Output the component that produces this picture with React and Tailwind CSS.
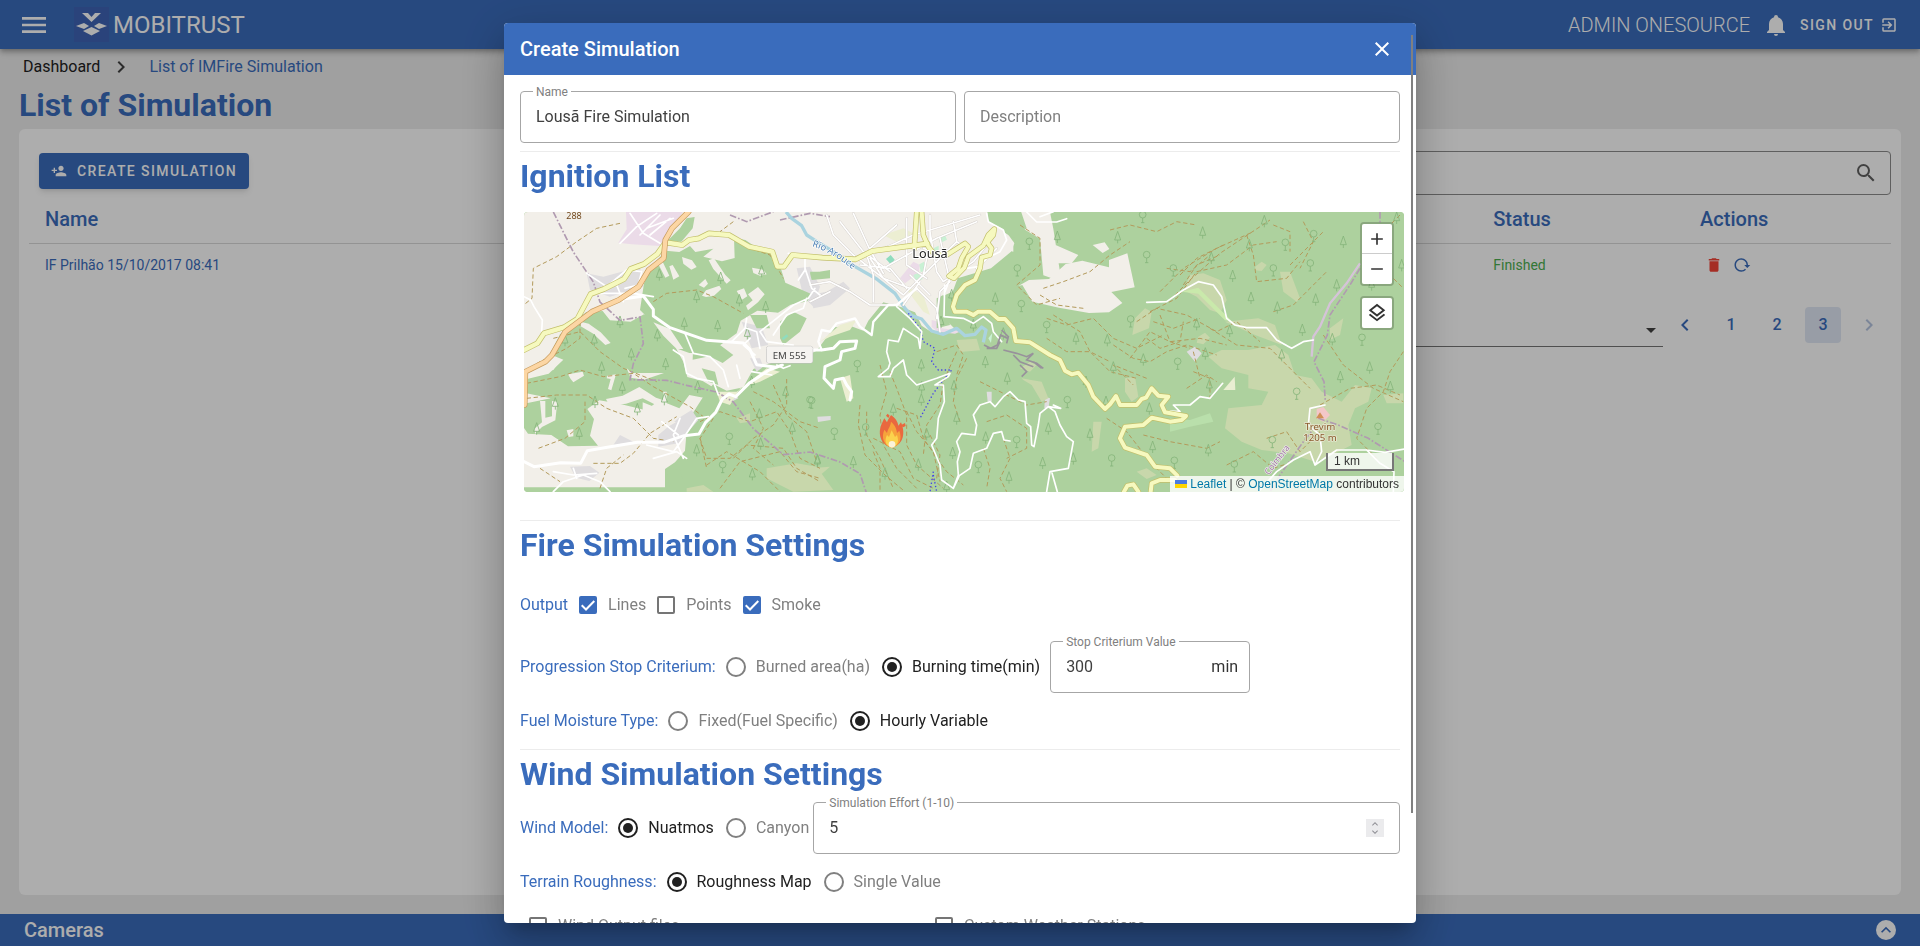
// src/App.jsx
import React, { useState } from 'react';
import {
  MdAdd,
  MdChevronLeft,
  MdChevronRight,
  MdClose,
  MdDelete,
  MdExitToApp,
  MdExpandLess,
  MdExpandMore,
  MdMenu,
  MdOutlineLayers,
  MdPersonAdd,
  MdRemove,
  MdSearch,
  MdArrowDropDown,
} from 'react-icons/md';

const Logo = () => (
  <svg viewBox="0 0 35 35" className="size-[35px] bg-[#465aaa]/40" fill="#fff" aria-hidden="true">
    <path d="M8 6h6l3.500 4L21 6h6L17.500 15z" />
    <path d="M2 19l8-3 5 3-5 3z" />
    <path d="M33 19l-8-3-5 3 5 3z" />
    <path d="M9 24l8.500-4 8.500 4-8.500 4.500z" />
  </svg>
);

const BellIcon = () => (
  <svg viewBox="0 0 24 24" className="size-6" fill="currentColor" aria-hidden="true">
    <path d="M21,19V20H3V19L5,17V11C5,7.9 7.03,5.17 10,4.29C10,4.19 10,4.1 10,4A2,2 0 0,1 12,2A2,2 0 0,1 14,4C14,4.1 14,4.19 14,4.29C16.97,5.17 19,7.9 19,11V17L21,19M14,21A2,2 0 0,1 12,23A2,2 0 0,1 10,21" />
  </svg>
);

const ReloadIcon = () => (
  <svg viewBox="0 0 24 24" className="size-[18px]" fill="currentColor" aria-hidden="true">
    <path d="M2 12C2 16.97 6.03 21 11 21C13.39 21 15.68 20.06 17.4 18.4L15.9 16.9C14.63 18.25 12.86 19 11 19C4.76 19 1.64 11.46 6.05 7.05C10.46 2.64 18 5.77 18 12H15L19 16H19.1L23 12H20C20 7.03 15.97 3 11 3C6.03 3 2 7.03 2 12Z" />
  </svg>
);

const Checkbox = ({ id, label, defaultChecked = false }) => (
  <div className="flex items-center gap-2">
    <span className="mx-[3px] grid size-[18px] place-items-center">
      <input
        id={id}
        type="checkbox"
        defaultChecked={defaultChecked}
        className="peer col-start-1 row-start-1 size-[18px] appearance-none rounded-xs border-2 border-[#757575] checked:border-[#3a6cbc] checked:bg-[#3a6cbc]"
      />
      <svg
        viewBox="0 0 18 18"
        className="pointer-events-none invisible col-start-1 row-start-1 size-[18px] peer-checked:visible"
        fill="none"
        stroke="#fff"
        strokeWidth="2"
        aria-hidden="true"
      >
        <path d="M2.700 9.300l4.300 4.200L15.300 5" />
      </svg>
    </span>
    <label htmlFor={id} className="text-[#808080]">{label}</label>
  </div>
);

const RadioGroup = ({ name, label, options, initial }) => {
  const [value, setValue] = useState(initial);

  return (
    <div role="radiogroup" aria-label={label} className="flex items-center gap-2 whitespace-nowrap">
      <span className="text-[#3a6cbc]">{label}</span>
      <div className="flex items-center gap-[10px]">
        {options.map((option) => (
          <label
            key={option}
            className={`flex items-center gap-2 ${value === option ? 'text-[#212121]' : 'text-[#808080]'}`}
          >
            <input
              type="radio"
              name={name}
              value={option}
              checked={value === option}
              onChange={() => setValue(option)}
              className="mx-[2px] grid size-5 appearance-none place-content-center rounded-full border-2 border-[#808080] checked:border-[#212121] checked:before:size-[10px] checked:before:rounded-full checked:before:bg-[#212121]"
            />
            {option}
          </label>
        ))}
      </div>
    </div>
  );
};

const Field = ({ id, label, defaultValue, type = 'text', className = '', children }) => (
  <div className={`relative flex h-[52px] items-center rounded border border-[#a6a6a6] px-[15px] ${className}`}>
    {defaultValue !== undefined && (
      <label htmlFor={id} className="absolute -top-2 left-3 bg-white px-[3px] text-xs leading-4 text-[#808080]">
        {label}
      </label>
    )}
    <input
      id={id}
      type={type}
      defaultValue={defaultValue}
      placeholder={defaultValue === undefined ? label : undefined}
      aria-label={label}
      className="w-full min-w-0 flex-1 appearance-none text-[#404040] outline-none placeholder:text-[#808080] [&::-webkit-inner-spin-button]:appearance-none"
    />
    {children}
  </div>
);

const SectionTitle = ({ children }) => (
  <h2 className="h-12 text-[32px] leading-12 font-bold text-[#3a6cbc]">{children}</h2>
);

// [x, y] of the conifer symbols
const TREES = [
  [418, 208], [602, 218], [725, 198], [493, 355], [593, 362], [658, 285], [530, 275], [737, 305], [412, 390],
  [135, 405], [223, 405], [334, 447], [245, 487], [437, 476], [307, 547], [352, 612], [225, 590], [106, 595],
  [50, 670], [178, 685], [433, 582], [533, 545], [300, 350], [682, 385], [718, 628], [797, 562], [817, 670],
  [722, 715], [530, 735], [697, 807], [893, 765], [695, 530],
  [1205, 546], [1204, 480], [1204, 583], [1120, 613], [1310, 640], [1220, 687], [1195, 778], [1298, 743],
  [1396, 470], [1462, 520], [1302, 543], [1397, 697], [1467, 817], [1568, 773], [1660, 760], [1710, 688],
  [1585, 670], [1426, 280], [1612, 95], [1668, 400], [1095, 805], [1263, 350], [1360, 360], [1450, 385], [1758, 590],
  [1698, 530], [1762, 405], [1295, 270], [1000, 770], [892, 768], [1280, 845],
  [1793, 96], [2048, 82], [2074, 158], [2188, 120], [2233, 48], [2138, 212], [2193, 278], [2272, 307], [2387, 283],
  [2450, 240], [2470, 110], [2630, 38], [2645, 180], [2347, 374], [2437, 402], [2549, 487], [2461, 515],
  [2611, 545], [2129, 377], [2030, 357], [2056, 445], [1870, 463], [1780, 487], [1888, 610], [1898, 725],
  [2065, 735], [2555, 238], [2068, 540], [2285, 450],
];

// [x, y] of the broadleaf symbols
const ROUND_TREES = [
  [875, 592], [608, 785], [628, 700], [1504, 302], [1528, 115], [1580, 365], [1492, 195], [1490, 710],
  [943, 685], [1037, 672], [1375, 785], [1642, 590], [1012, 482], [870, 590], [2296, 118], [2381, 92], [2260, 195],
  [1832, 348], [1973, 475], [2257, 710], [2574, 670], [1963, 772], [2143, 783], [2330, 565], [2371, 180],
  [1868, 35], [1960, 195], [1880, 155], [2526, 403], [1775, 765],
];

// Footpaths
const TRACKS = [
  'M300 55l-70 15-60 40-60 45-70 35-4 90-25 20',
  'M400 290l40-25 90-10 50 20 90 50',
  'M180 350v50l-40 30-80 40-48 30',
  'M100 400l80-20 60 60 70 50 100 40',
  'M20 535l100-20 60-20 70 20 90-10 60 40 110 60 40 30',
  'M20 580l90-10 90 0 60 40 80 30 60 60 60 10',
  'M195 590v60l-60 50-80 30',
  'M220 775l80 0 40-30 50-60 80-50',
  'M240 850l20-60 50-40',
  'M60 790l60 40',
  'M640 50l-40 30 90 50 60 20 40 70',
  'M540 650l60-30 90 30 80-30 40 60 30 80 60 30',
  'M540 700l20 60 70 0 50-40 110 10 40 60 70 40',
  'M640 760l60-60 60-40 40-60 0-80',
  'M600 850l60-80 120-30 50 60 70 20',
  'M560 780l60-40 100 60 60 60',
  'M700 560l60 30 80 60 60 20',
  'M690 590l40 80-30 60 60 50M760 540l40 90 60 50 30 90M580 640l-40 60 20 90',
  'M1020 600l-5 60 20 90 60 60 60 50',
  'M1040 620l0 70 40 70 40 90M1060 740l20 50 0 70M1160 620l30 60 50 60 20 90',
  'M1080 480l20 80-20 70 10 90 40 70 60 60',
  'M1110 500l20 50 30 80 0 90 30 60 80 70',
  'M1130 610l60 20 20 70 70 100 50 40',
  'M1060 700l80 40 40 80 60 30',
  'M1340 460l-30 60-10 70 20 60',
  'M1310 440l-40 90-10 70-40 60-10 90',
  'M1250 440l60-20 20 30-20 60M1230 690l30 60-10 70',
  'M1380 530l60 30 80 40 60-10',
  'M1400 650l60-20 60 40 0 60-60 30',
  'M1390 730l20 60-10 60M1450 700l20 60-30 60 20 40',
  'M1580 400l60 40 70 0 60 60 80 20',
  'M1580 340l60 20 80-20 60 60 70 30 80-40',
  'M1560 270l50 30 80 10M1600 330l80 50 30 60 60 30',
  'M1500 60l60 40 0 80-70 60 60 60 70-20',
  'M1570 250l60-20 80-30 60-50 60-40',
  'M1770 75l60-15 80 20 60-30 60 10',
  'M1950 285l60-60 90-80 90-60 60-40',
  'M1920 260l70-70 100-60 110-50',
  'M1890 320l80-40 60-80 90-20 80-60 70-10',
  'M1980 210l50-50 80-40M1990 240l40-60 70-30M1940 190l70 10 60-50',
  'M2180 90l20 60 10 80 90-10 40-50',
  'M2260 60l50 20 0 60M2310 180l40-40 60-60M2350 50l30 60-40 80',
  'M1850 350l60-40 90 20 90 50 60-30 70 60',
  'M1830 460l60-80 60 30 90-10 80 20',
  'M1880 400l40 30 60-20 10-60M1900 350l60 20 80-30M1920 330l30 80 60 20',
  'M1780 420l60 40 50 10 50-30 60-20 90 30',
  'M2070 370l80 50 100 10 60 60 60 60',
  'M2260 320l60-20 60-60 40-40',
  'M2410 390l60 90 90 70 90 40',
  'M2650 440l-40 60-20 60-50 50-30 90 60 60',
  'M2020 500l50 20 0 60M2000 550l60-40 30 20M2020 440l20 80',
  'M2400 600l90-50 80-10 70 30',
  'M2240 700l60-20 40 60 60-60',
  'M2120 780l80-40 60 50 60-20',
  'M1870 690l80 20 110 20 40-20',
  'M1880 520l-100-40 60 60',
  'M2640 30l-90 90 40 70 60 60',
  'M1760 640l60 40 70 90 60 60',
];

const TOWN_STREETS =
  'M920 30l20 60 60 60 90 70 60 50 60-60 20-100 0-80M960 50l70 90 80 60M1000 25l50 110 40 70M1050 150l130-60 200-60M1090 190l160-90 120-50M1130 60l-80 70M1160 40v140l60 40M1200 230l-50 70M1230 80l20 120 20 30M1260 100l30 130-30 30-10 80M1270 230l90-60 40-50M1300 50l10 60 30 20M1210 130l70 20M1190 250l60 60 10 70M1040 150l20 60 0 80M1370 190l60-60M870 240l60-10 60 30 60 40 70 0M870 290l60-30M1170 250l-80-30-40-60M1170 210l60 60M1310 110l-60 60-60 60M1020 180l90 10 50 60';

const VALLEY_ROAD =
  'M12 435l40-20 20-30 60-18 40-25 40-75 40-15 60-30 20-30 40-15 40-30 25-35 50 8 20-15 30-5 30-15 60 5 60 35 70 15 15 45 20 0 25-35 90 8 100 5 50-25 165-22';

const MOUNTAIN_ROAD =
  'M1190 21L1183 130M1205 21L1210 90 1225 125 1245 150 1280 150 1335 115 1345 125 1325 160 1315 190 1287 213 1302 220 1333 188 1345 155 1390 122 1405 90 1423 72 1420 90 1402 112 1415 130 1410 150 1385 157 1380 190 1365 225 1335 240 1310 270 1299 305 1305 320 1340 320 1360 330 1375 320 1410 320 1435 342 1455 342 1480 370 1487 408 1530 412 1590 450 1620 465 1635 497 1655 508 1675 503 1705 540 1720 575 1755 612 1770 598 1788 573 1800 600 1850 600 1865 582 1878 578 1895 550 1915 572 1945 575 1925 600 1935 622 1998 633 1985 645 1950 650 1895 638 1870 660 1815 665 1800 700 1815 728 1880 750 1905 785 1950 790 1972 812M1812 860L1822 842 1840 838 1855 860M1892 860L1895 835 1920 825 1965 825';

const TRUNK_ROAD =
  'M14 600l2-100 60-30 20-20 40-70 80-60 80-35 60-40 30-50 45-35 5-55 20-35 50-50';

const SimulationMap = () => (
  <svg viewBox="12 21 2640 840" preserveAspectRatio="xMidYMid slice" className="h-full w-full" role="img" aria-label="Map of Lousã">
    <defs>
      <g id="conifer" fill="none" stroke="#86b57b" strokeWidth="2.500">
        <path d="M0-17L-9 9H9zM0 9v10" />
      </g>
      <g id="broadleaf" fill="none" stroke="#86b57b" strokeWidth="2.500">
        <circle cy="-6" r="10" />
        <path d="M0 4v14M-5 18h10" />
      </g>
    </defs>
    <rect x="0" y="0" width="2700" height="900" fill="#add19e" />

    {/* farmland and town */}
    <path
      fill="#f2efe9"
      d="M0 0H1400l5 50 50 25 28 40-10 25-60 50-100 30-15 40-28 12-5 60 40 40-70 10-30-20-20-40-40-15-55-15-45 55-15 30-40-15-45 5-25 30-30 40-20 10-40 25-70 0-60 20-30 55-50 10-40-20-25 30-35 55-20 55-5 60-30 35-30 20v55H0z"
    />
    <path fill="#f2efe9" d="M1495 243l32-18 60-3 50-45 50-10 80 20 0-22 55-20 22 102-70 14 33 33-40 28-60 2-90-16-80-18-30-50z" />
    <path fill="#f2efe9" d="M1480 21h110l10 50 20 130-20 20-30-10-10-110-50-30zM1585 140l10-25 80 35-20 25-50 0zM1718 120l36-8 14 20-20 12zM1455 90l25 20 0 30-20-5z" />

    {/* industrial and residential */}
    <path fill="#ebdbe8" d="M318 21h170l-28 50-40 52-85-5-40-5 25-40z" />
    <path fill="#ebdbe8" d="M1140 220l40-50 20 10-5 25-40 30zM1235 345l20 5 10 20 60 8-20 8-50-5-20-15z" />
    <path
      fill="#dfdddf"
      d="M200 205l50 10 110-30 10 60-100 30-60-20zM665 350l60 15 20 55-50 10zM830 190l40-5 30 60-20 60-30-30zM415 690l60-50 40-25 20 30-60 70-60 10zM150 785l60-2 28 20-30 25-40-10zM300 690l40 20-60 10zM690 460l30 0 10 25-20 15zM640 560l15 20-20 10zM870 270l50-10 50-30 20 20-60 50-50 10zM1400 560l15 0 0 30-12 0zM1575 575l15 5-5 30-12 0zM892 635l40-2 0 12-38 6zM2000 440l25-15 20 20-20 25z"
    />
    <path fill="#eceed2" d="M590 560l60 0 90-70 40 10-60 30-60 20-30 50-30-10zM900 410l60-50 50-15-20 30-60 20zM960 520l30-10 10 70-20 10zM1150 240l60 30 20 60-20-10zM1090 90l60-20 40 20-60 20z" />

    {/* forest patches */}
    <g fill="#add19e">
      <path d="M372 235l30-60 36-38 40 4 32-18 16 18 54-10-30 24 56 14 38-10-2-60 34 6 30 20 44 20 34 50 12 38 78 34-12 22-50 10-38 24-62-6-50 30-12 38-50 36-70-4-90-32-40-30-40-40z" />
      <path d="M90 448l30-60 78-66 50-4 22 28 62 4 40-22 46 18 42 38 60 20 18 40-30 0-40-14 22 40 12 46 46 12 50 30-40 22-50-10-30 40-60-24-40 30-80-20-60-10-36 26 20 30-12 50 24 30-90 2-50-34-70-4-28-40-4-46 100-20-86-18 0-36 80-20 44-42z" />
      <path d="M520 412l80 8 40 30-32 24-40-20-50 10zM545 490l40 10 10 40-30-10zM500 40l24-4-6 34-34 40-44 0 40-40zM780 350l40-30 40 20-20 40-50 40-10-20zM690 330l50 0 10 40-40 0zM720 250l10-20-30 40zM870 200l26 0 0 18-22 0zM440 790l40 5 20 65h-50zM870 205l60-10 0 25-55 5z" />
      <path d="M1250 280l20-10 20 90-40 10zM1440 30l60-20 20 60-40 30-30-20z" />
    </g>
    <g fill="#f2efe9">
      <path d="M412 172l12-10 24 50-12 6zM448 184l10-4 20 34-18 10zM486 156l30 10 14 20-16 8-24-18zM566 166l16-6 34 50 16 16-12 10-40-44zM546 272l12-16 40-14 6 10-22 20-24 4zM696 188l34 6 10 14-20 4-20-8zM536 240l20-18 8 14-12 12zM650 258l22-8 10 24-16 10zM684 268l30-22 20 22-20 24-30 24-6-14 20-16z" />
      <path d="M182 350l24 6 36 26 30 32-16 6-36-34-38-22zM262 512l26-4-14 48-10-4 8-30-12-2zM258 582l50-10 50-26 50 32 30 10-30 12-40-20-50 16-50 6zM368 592l30 12 30 36 40 12-30 16-40-22-30-20zM144 508l44-8 4 12-32 20-8-10zM60 588l16 0 0 50 20-4 0-46 16 2-6 56-40 20-20 20-4-14 24-20zM20 505l30-24 60 0-10 14-60 10zM140 676l20-4 0 22-14 2zM94 702l20 0-6 12-12 0zM320 490l16 14 96 0-60 20-40-6zM430 560l10 0 0 40-12 0zM400 352l50 20 40 60-20 0-40-40z" />
    </g>

    {/* heath */}
    <g fill="#c8d7ab">
      <path d="M2065 455l40-20 80 0 80-15 40 30 20 60 50 10 30 40 60 30 40-50 50 10-10 40-40 20-20 50 10 60-60 30-50 20-80-25-80-10-60-25-50-40 10-60 100-10 20-40-60-10 0-40-80-20z" />
      <path d="M1990 255l20-45 40-5 50 20 20 60-20 40-30-10-40-40zM2115 350l100-10 50 20 20 60-80-30zM2280 200l30 0 30 80-10 10-40-30zM2430 370l40-30-10 50-30 15zM1845 340l30-30 20 10-8 50-50 20zM1815 520l30-5 10 60-20 15-20-30zM2035 395l20-12 15 15-20 20-20-5zM2205 185l20-15 15 10-15 18-18-2zM2590 570l60-5 0 30-50 0zM1850 800l30-10 30 20-30 12z" />
      <path d="M1310 405l60-4 10 35-60 5zM1505 520l60 10 20 50-20 10-30-50-25-15zM740 790l90-15 60 10 50 70-120 5-80-40zM650 640l40-15 0 25-30 5zM1720 650l25 0-10 80-20 10zM870 790l60-5-40 35zM500 850l50-10 30 20h-80zM1500 490l30-20 20 10-20 20z" />
    </g>
    <path fill="#f3c7c8" d="M2390 612l20-6 20 24-20 20-20-10z" />
    <path fill="#e9eed2" d="M2110 555l34-40 2 40z" />
    <path fill="#b9dfab" d="M1950 640l60 5 60-20 10 25-70 15-60 15z" />
    <path fill="#c9e9ab" d="M1985 260l50-12 60 60 40 40-20-2-50-50-30-30z" />
    <path fill="#8fdcbe" d="M1098 162l14-12 12 14-12 14zM785 400l15-12 5 6-15 12z" />
    <path fill="#c9f1d4" d="M1198 178l14-8 6 26-16 6zM1180 210l20-8 8 20-20 8zM1255 100l20-10 6 14-20 10zM1240 130l16-8 0 14-14 4zM1405 400l12-16-4 30z" />

    {/* tracks */}
    <g fill="none" stroke="#b39a5b" strokeWidth="3" strokeDasharray="13 8">
      {TRACKS.map((d) => (
        <path key={d} d={d} />
      ))}
    </g>

    {TREES.map(([x, y]) => (
      <use key={`${x}-${y}`} href="#conifer" x={x} y={y} />
    ))}
    {ROUND_TREES.map(([x, y]) => (
      <use key={`${x}-${y}`} href="#broadleaf" x={x} y={y} />
    ))}

    {/* municipality borders */}
    <g fill="none" stroke="#b09ab0" strokeWidth="5" strokeDasharray="20 6 5 6">
      <path d="M100 21l60 120 60 90 20 60 60 55 60-10 10 80-30 60-10 48 110 2 60 15 90 20 50 30 60 80 90 78 80-8 90 30 60 35 30 90" />
      <path d="M630 30l50 20 80-30M780 45l90-20 60 10" />
      <path d="M2580 21v40M2520 190l-30 50-60 90-8 60-40 80 30 60 4 60M2395 640l60 20 90 40 110 70M2390 660l-40 50-70 100-30 50" />
    </g>
    <path fill="none" stroke="#d5c3d8" strokeWidth="7" d="M2520 175l-40 60-50 60-30 70-20 30-5 60" />

    {/* river */}
    <path
      fill="none"
      stroke="#aad3df"
      strokeWidth="10"
      strokeLinejoin="round"
      d="M798 21L815 40 845 62 860 90 885 106 940 140 1000 182 1070 222 1125 265 1155 310 1175 332 1205 342 1235 378 1270 388 1310 370 1335 392 1365 388 1385 366 1398 375 1390 412"
    />
    <path fill="none" stroke="#4340e8" strokeWidth="4" strokeDasharray="4 7" d="M1165 325l35 45 10 40 35 20-10 40 20 25 40 0-25 30-30 40-40 75M1240 800l-10 60M1240 810l10 50" />

    {/* small roads */}
    <g fill="none" strokeLinejoin="round" strokeLinecap="round">
      <path stroke="#cfcac6" strokeWidth="7" d={TOWN_STREETS} />
      <g stroke="#fff" strokeWidth="5">
        <path d={TOWN_STREETS} />
        <path d="M330 25l40 60 50 30M300 115l50-50 60-40M360 90l60-60M380 70l80-30M390 90l60-50M12 275l20 10 10 20 25 40-2 35M200 205l60 40 60-50 45 5-10 40-40 10M240 265l100 0 60 10M290 240l20 50M460 435l30 20 10 50 30 15 50 10 15 40M495 385l25 60 50 10 40 40 15 50M680 340l-5 30-40 40M680 370l30 10 10 50M690 400l-20 20 35 30M720 380l50-40 50-40 45-20 20-30M720 380l20 30 80 10M805 145l50 10 0 40-20 30M855 190l20 60 25 20M860 280l-10 30-50 20-40 60M380 720l80 20 30-40 40-60 35-5M400 760l70-20 30 20M480 640l-20 50 30 70M425 650l50 40M695 500l60 10M650 480l10 40M770 480l20 10 20-8M100 860l30-30 60-20 50 20 30 30M160 790l10 30M100 800l60 10 70-5" />
        <path d="M1130 305L1170 340 1205 380 1200 430 1195 400 1150 370 1135 410 1105 405 1100 440 1110 475 1105 490 1075 515 1110 515 1120 490 1150 465 1160 510 1190 540 1250 520 1290 505 1285 515 1245 540 1270 540 1273 590 1255 640 1250 700 1235 720 1260 780 1265 825 1300 850 1315 810 1312 770 1320 740 1310 710 1325 685 1365 690 1370 660 1360 630 1380 600 1410 590 1425 605 1450 575 1470 560 1495 585 1515 590 1520 655 1532 665 1535 720 1542 725 1555 660 1560 625 1585 605 1605 620 1620 660 1640 695 1660 710 1645 790 1590 800 1580 860M1300 850L1318 812 1350 790 1360 745 1400 730 1420 685 1445 680 1452 705 1470 708M1595 800L1612 860M1585 605L1622 610 1600 600" />
        <path d="M1400 25L1405 50 1450 75 1460 105 1440 140 1400 160 1375 185 1340 190M1274 240L1272 335 1330 340 1360 355 1390 335 1415 355 1420 380 1445 410M1290 220L1275 260M1520 21l30 30 60 0 30-10M1560 35l40-15" />
        <path d="M1880 292L1940 290 1990 255 2035 230 2080 240 2105 275 2120 340 2145 360 2180 368 2240 368 2270 405 2315 430 2350 410 2380 405M2108 535L2070 580 2040 575 2010 600 1960 600 1980 620 1950 618M2415 600L2370 610 2365 660 2400 690 2405 740 2385 780 2370 740 2320 765 2270 800 2220 855M2385 780L2450 735 2540 735 2595 742 2655 732M2540 735L2580 775 2622 800 2620 860" />
      </g>
      <g stroke="#fff" strokeWidth="9">
        <path d="M12 770l30 15 80-12 60 2 20-38 60-10 90-15 80 0 60-20 45-5 20-35 30-30 20-40 20-15 20 8 40-40 60-40 40-15M290 285l80-12 30 40 0 20 50 35 110 38 110 8 20 20 20 45 60 8" />
        <path d="M870 435L905 435 940 430 960 410 1010 408 1005 430 965 440 960 465 915 485 912 520 940 550 945 525 970 520 980 540 995 560 990 585" />
        <path strokeWidth="7" d="M905 435L895 410 905 375 930 380 950 355 1005 340 1020 365 1055 390 1060 350 1105 300 1130 300 1190 250" />
      </g>

      {/* secondary and trunk roads */}
      <path stroke="#c2bf6a" strokeWidth="17" d={VALLEY_ROAD} />
      <path stroke="#c2bf6a" strokeWidth="16" d={MOUNTAIN_ROAD} />
      <path stroke="#f6f9bf" strokeWidth="13" d={VALLEY_ROAD} />
      <path stroke="#f6f9bf" strokeWidth="12" d={MOUNTAIN_ROAD} />
      <path stroke="#c79a5c" strokeWidth="17" d={TRUNK_ROAD} />
      <path stroke="#fcd6a4" strokeWidth="13" d={TRUNK_ROAD} />
    </g>

    {/* cliffs */}
    <path
      fill="none"
      stroke="#98929b"
      strokeWidth="5"
      d="M1392 420l20 10 20-10 10-30 20 10M1400 430l30 0 10-20M1450 435l40 10 30 10 20-10-20 20 30 10 20 15M1480 450l20 20 40 15M1500 480l20 20-15 15M1445 375l20 20-5 20M1540 470l25 20"
    />

    {/* labels */}
    <g fontFamily="Noto Sans, sans-serif" textAnchor="middle" paintOrder="stroke" strokeLinejoin="round">
      <text x="162" y="43" fontSize="27" fill="#734a1f" stroke="#f2efe9" strokeWidth="5">288</text>
      <text x="1230" y="158" fontSize="38" fill="#222" stroke="#fff" strokeWidth="6">Lousã</text>
      <path id="river-label" d="M876 124q60 16 140 84" fill="none" />
      <text fontSize="28" fill="#4d80b3" stroke="#fff" strokeWidth="4" textAnchor="start">
        <textPath href="#river-label">Rio Arouce</textPath>
      </text>
      <rect x="740" y="424" width="138" height="50" rx="6" fill="#f5f3f0" stroke="#bbb" strokeWidth="3" />
      <text x="808" y="461" fontSize="29" fill="#444">EM 555</text>
      <path d="M2388 640l12-18 12 18z" fill="#d08f55" />
      <text x="2400" y="674" fontSize="29" fill="#8a5a2b" stroke="#e4e6cf" strokeWidth="5">Trevim</text>
      <text x="2400" y="709" fontSize="29" fill="#8a5a2b" stroke="#e4e6cf" strokeWidth="5">1205 m</text>
      <text transform="translate(2278 770) rotate(-52)" fontSize="26" fill="#a37ba3" stroke="#eee" strokeWidth="4">Coimbra</text>
    </g>

    {/* ignition marker */}
    <g>
      <path fill="#e9683f" d="M1115 728c-30-8-40-35-34-60 3-10 8-20 12-28l8 12c6-15 12-20 12-22 14 10 20 20 22 32l8-10c12 26 12 66-28 76zM1098 632l5-6 6 6-4 7zM1145 659l10-5 2 9-8 4z" />
      <path fill="#f6a33b" d="M1115 728c-24-8-32-30-22-54l8 10c4-16 10-18 12-34 14 12 16 22 18 34l7-7c8 22 4 44-23 51z" />
      <path fill="#fbd34d" d="M1115 728c-20-6-22-22-14-38l6 6 8-20 10 20 6-6c6 18 4 32-16 38z" />
      <circle cx="1116" cy="718" r="10" fill="#fbf3d9" />
    </g>
  </svg>
);

const mapButton = 'grid size-[30px] place-items-center bg-white text-[#333]';

const MapPanel = () => (
  <div className="relative -mr-1 ml-1 h-[280px] overflow-hidden rounded bg-[#add19e]">
    <SimulationMap />
    <div className="absolute top-[10px] right-[10px] flex flex-col gap-[10px]">
      <div className="divide-y divide-[#ccc] overflow-hidden rounded border-2 border-black/20 bg-clip-padding">
        <button type="button" aria-label="Zoom in" className={mapButton}>
          <MdAdd className="size-5" />
        </button>
        <button type="button" aria-label="Zoom out" className={mapButton}>
          <MdRemove className="size-5" />
        </button>
      </div>
      <div className="overflow-hidden rounded border-2 border-black/20 bg-clip-padding">
        <button type="button" aria-label="Layers" className={mapButton}>
          <MdOutlineLayers className="size-[22px]" />
        </button>
      </div>
    </div>
    <div className="absolute right-0 bottom-0 flex flex-col items-end gap-[5px] font-['Liberation_Sans',sans-serif] text-xs">
      <div className="mr-[10px] h-[18px] w-[68px] border-2 border-t-0 border-[#777] bg-white/80 px-[6px] leading-4 text-[#333]">
        1 km
      </div>
      <div className="flex items-center bg-white/80 px-[5px] leading-4 text-[#333]">
        <svg viewBox="0 0 12 8" className="mr-[3px] h-2 w-3" aria-hidden="true">
          <path fill="#4C7BE1" d="M0 0h12v4H0z" />
          <path fill="#FFD500" d="M0 4h12v4H0z" />
        </svg>
        <a href="#leaflet" className="text-[#0078a8]">Leaflet</a>
        <span className="whitespace-pre"> | © </span>
        <a href="#osm" className="text-[#0078a8]">OpenStreetMap</a>
        <span className="whitespace-pre"> contributors</span>
      </div>
    </div>
  </div>
);

const CreateSimulationDialog = () => (
  <div className="fixed inset-0 z-10 flex items-center justify-center bg-black/32">
    <div
      role="dialog"
      aria-modal="true"
      aria-labelledby="dialog-title"
      className="relative flex h-[calc(100%-46px)] w-[47.5%] flex-col overflow-hidden rounded bg-white shadow-[0_11px_15px_-7px_rgba(0,0,0,0.2),0_24px_38px_3px_rgba(0,0,0,0.14),0_9px_46px_8px_rgba(0,0,0,0.12)]"
    >
      <div className="flex h-[52px] shrink-0 items-center justify-between bg-[#3a6cbc] px-4 text-white">
        <h2 id="dialog-title" className="text-xl font-medium">Create Simulation</h2>
        <button type="button" aria-label="Close" className="mr-[6px]">
          <MdClose className="size-6" />
        </button>
      </div>

      <form className="min-h-0 flex-1 overflow-hidden px-4 pt-4">
        <div className="mb-2 grid grid-cols-2 gap-2">
          <Field id="name" label="Name" defaultValue="Lousã Fire Simulation" />
          <Field id="description" label="Description" />
        </div>

        <hr className="border-[#ececec]" />
        <SectionTitle>Ignition List</SectionTitle>
        <div className="pt-3 pb-7">
          <MapPanel />
        </div>

        <hr className="border-[#ececec]" />
        <SectionTitle>Fire Simulation Settings</SectionTitle>
        <div className="flex h-[72px] items-center gap-2">
          <span className="text-[#3a6cbc]">Output</span>
          <Checkbox id="lines" label="Lines" defaultChecked />
          <Checkbox id="points" label="Points" />
          <Checkbox id="smoke" label="Smoke" defaultChecked />
        </div>
        <div className="flex items-center gap-[10px]">
          <RadioGroup
            name="stop"
            label="Progression Stop Criterium:"
            options={['Burned area(ha)', 'Burning time(min)']}
            initial="Burning time(min)"
          />
          <Field id="stop-value" label="Stop Criterium Value" defaultValue="300" className="w-[200px]">
            <span className="-mr-1 text-[#333]">min</span>
          </Field>
        </div>
        <div className="flex h-14 items-center">
          <RadioGroup
            name="moisture"
            label="Fuel Moisture Type:"
            options={['Fixed(Fuel Specific)', 'Hourly Variable']}
            initial="Hourly Variable"
          />
        </div>

        <hr className="border-[#ececec]" />
        <SectionTitle>Wind Simulation Settings</SectionTitle>
        <div className="mt-1 flex items-center gap-1">
          <RadioGroup name="wind" label="Wind Model:" options={['Nuatmos', 'Canyon']} initial="Nuatmos" />
          <Field id="effort" type="number" label="Simulation Effort (1-10)" defaultValue="5" className="flex-1">
            <span className="flex size-[18px] flex-col items-center justify-center bg-[#ebebed] text-[#909096]">
              <button type="button" aria-label="Increase" className="h-2 overflow-hidden">
                <MdExpandLess className="-mt-[2px] size-3" />
              </button>
              <button type="button" aria-label="Decrease" className="h-2 overflow-hidden">
                <MdExpandMore className="-mt-[2px] size-3" />
              </button>
            </span>
          </Field>
        </div>
        <div className="flex h-14 items-center">
          <RadioGroup
            name="roughness"
            label="Terrain Roughness:"
            options={['Roughness Map', 'Single Value']}
            initial="Roughness Map"
          />
        </div>
        <div className="grid h-8 grid-cols-[406px_1fr] items-center px-[6px]">
          <Checkbox id="wind-files" label="Wind Output files" />
          <Checkbox id="stations" label="Custom Weather Stations" />
        </div>
      </form>

      {/* scroll thumb */}
      <div className="absolute top-3 right-[3px] h-[778px] max-h-[87%] w-[2px] bg-[#808080]" />
    </div>
  </div>
);

const pageButton = 'grid size-9 place-items-center rounded text-base font-medium';

const App = () => {
  return (
    <div className="flex min-h-screen flex-col bg-[#ececec] font-[Roboto,sans-serif] text-base text-[#212121]">
      <header className="z-[1] flex h-[49px] items-center bg-[#3a6cbc] pr-[22px] pl-[18px] text-white shadow-[0_2px_4px_-1px_rgba(0,0,0,0.2),0_4px_5px_rgba(0,0,0,0.14),0_1px_10px_rgba(0,0,0,0.12)]">
        <button type="button" aria-label="Menu" className="mr-6">
          <MdMenu className="size-8" />
        </button>
        <Logo />
        <span className="ml-1 flex-1 text-2xl">MOBITRUST</span>
        <span className="mr-[14px] text-xl font-light">ADMIN ONESOURCE</span>
        <button type="button" aria-label="Notifications" className="mr-3">
          <BellIcon />
        </button>
        <button type="button" className="flex items-center gap-[6px] text-sm font-medium tracking-widest">
          SIGN OUT
          <MdExitToApp className="size-[18px]" />
        </button>
      </header>

      <main className="flex flex-1 flex-col px-[19px] pb-[19px]">
        <nav aria-label="Breadcrumb" className="flex h-9 items-end px-1 pb-[6px]">
          <a href="#dashboard">Dashboard</a>
          <MdChevronRight className="mr-4 ml-[9px] size-6 text-[#424242]" />
          <a href="#simulations" className="text-[#3a6cbc]">List of IMFire Simulation</a>
        </nav>
        <h1 className="h-11 text-[32px] leading-10 font-bold text-[#3a6cbc]">List of Simulation</h1>

        <section className="flex-1 rounded-md bg-white px-[10px] pt-[22px]">
          <div className="flex items-start justify-between">
            <button
              type="button"
              className="mt-[2px] ml-[10px] flex h-9 items-center gap-[10px] rounded bg-[#3a6cbc] px-3 text-sm font-medium tracking-widest text-white shadow-md"
            >
              <MdPersonAdd className="size-4" />
              <span>CREATE SIMULATION</span>
            </button>
            <div className="flex h-11 w-1/2 items-center rounded border border-[#8c8c8c] pr-3">
              <input type="text" aria-label="Search" className="h-full flex-1 px-3 outline-none" />
              <MdSearch className="size-6 text-[#616161]" />
            </div>
          </div>

          <table className="w-full table-fixed text-left text-[#3a6cbc]">
            <thead>
              <tr className="h-12 border-b border-[#d9d9d9] text-xl">
                <th className="w-7/9 px-4 font-medium">Name</th>
                <th className="w-1/9 px-4 font-medium">Status</th>
                <th className="w-1/9 px-4 font-medium">Actions</th>
              </tr>
            </thead>
            <tbody>
              <tr className="h-11 text-sm">
                <td className="px-4">
                  <a href="#prilhao">IF Prilhão 15/10/2017 08:41</a>
                </td>
                <td className="px-4 text-[#4caf50]">Finished</td>
                <td className="px-4">
                  <div className="flex items-center gap-[10px] pl-[5px]">
                    <button type="button" aria-label="Delete" className="text-[#f44336]">
                      <MdDelete className="size-[18px]" />
                    </button>
                    <button type="button" aria-label="Reload">
                      <ReloadIcon />
                    </button>
                  </div>
                </td>
              </tr>
            </tbody>
          </table>

          <div className="mt-5 flex justify-end gap-1 pr-1 text-[#3a6cbc]">
            <button
              type="button"
              aria-label="Rows per page"
              className="flex h-10 w-[400px] items-end justify-end border-b border-[#757575] pb-1 text-[#424242]"
            >
              <MdArrowDropDown className="size-6" />
            </button>
            <div className="flex gap-[10px]">
              <button type="button" aria-label="Previous page" className={pageButton}>
                <MdChevronLeft className="size-6" />
              </button>
              <button type="button" className={pageButton}>1</button>
              <button type="button" className={pageButton}>2</button>
              <button type="button" aria-current="page" className={`${pageButton} bg-[#e1e8f5]`}>3</button>
              <button type="button" aria-label="Next page" disabled className={`${pageButton} text-[#b5c5e0]`}>
                <MdChevronRight className="size-6" />
              </button>
            </div>
          </div>
        </section>
      </main>

      <footer className="flex h-8 items-center justify-between bg-[#3a6cbc] px-6 text-white">
        <h2 className="text-xl font-medium">Cameras</h2>
        <button type="button" aria-label="Expand cameras" className="rounded-full bg-white text-[#3a6cbc]">
          <MdExpandLess className="size-5" />
        </button>
      </footer>

      <CreateSimulationDialog />
    </div>
  );
};

export default App;
